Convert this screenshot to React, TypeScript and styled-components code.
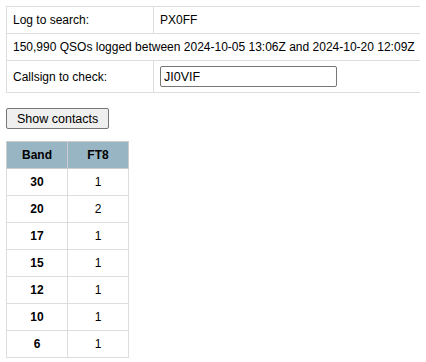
import React from "react";
import styled, { createGlobalStyle } from "styled-components";

const Global = createGlobalStyle`
  body { margin: 6px; font-family: Arial, "Liberation Sans", sans-serif; font-size: 12px; color: #000; background: #fff; }
`;

const InfoTable = styled.table`
  border-collapse: collapse;
  font-size: 12px;
`;

const Cell = styled.td<{ $wide?: boolean }>`
  border: 1px solid #ddd;
  padding: 0 6px;
  height: 26px;
  width: ${(p) => (p.$wide ? "auto" : "134px")};
  vertical-align: middle;
  white-space: nowrap;
`;

const TallCell = styled(Cell)`
  height: 31px;
`;

const CallInput = styled.input`
  box-sizing: border-box;
  width: 177px;
  height: 21px;
  border: 1px solid #767676;
  border-radius: 2px;
  font-family: Arial, "Liberation Sans", sans-serif;
  font-size: 12.5px;
  padding: 1px 3px;
`;

const Button = styled.button`
  display: block;
  margin: 15px 0 12px;
  font-family: Arial, "Liberation Sans", sans-serif;
  font-size: 12.5px;
  padding: 1px 10px;
  height: 21px;
  background: #efefef;
  border: 1px solid #767676;
  border-radius: 2px;
  color: #000;
`;

const BandTable = styled.table`
  border-collapse: collapse;
  font-size: 12px;
`;

const Th = styled.th`
  background: #98b5c3;
  border: 1px solid #ccc;
  height: 26px;
  width: 60px;
  padding: 0;
  font-weight: bold;
  text-align: center;
`;

const Td = styled.td<{ $bold?: boolean }>`
  border: 1px solid #ddd;
  height: 26px;
  width: 60px;
  padding: 0;
  text-align: center;
  font-weight: ${(p) => (p.$bold ? "bold" : "normal")};
`;

const rows: [string, string][] = [
  ["30", "1"],
  ["20", "2"],
  ["17", "1"],
  ["15", "1"],
  ["12", "1"],
  ["10", "1"],
  ["6", "1"],
];

export default function App() {
  return (
    <>
      <Global />
      <InfoTable>
        <tbody>
          <tr>
            <Cell>Log to search:</Cell>
            <Cell $wide>PX0FF</Cell>
          </tr>
          <tr>
            <Cell $wide colSpan={2}>
              150,990 QSOs logged between 2024-10-05 13:06Z and 2024-10-20 12:09Z
            </Cell>
          </tr>
          <tr>
            <TallCell>Callsign to check:</TallCell>
            <TallCell $wide>
              <CallInput defaultValue="JI0VIF" />
            </TallCell>
          </tr>
        </tbody>
      </InfoTable>
      <Button>Show contacts</Button>
      <BandTable>
        <thead>
          <tr>
            <Th>Band</Th>
            <Th>FT8</Th>
          </tr>
        </thead>
        <tbody>
          {rows.map(([b, n]) => (
            <tr key={b}>
              <Td $bold>{b}</Td>
              <Td>{n}</Td>
            </tr>
          ))}
        </tbody>
      </BandTable>
    </>
  );
}
